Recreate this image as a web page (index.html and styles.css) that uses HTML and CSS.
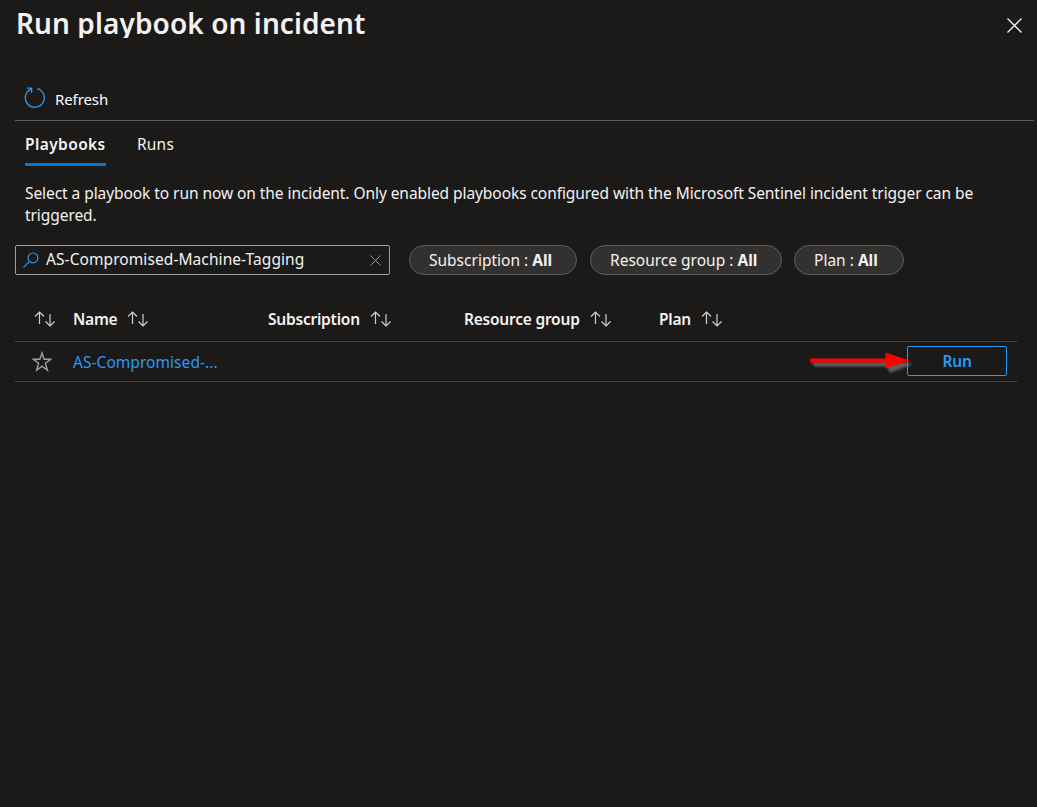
FILE: index.html
```
<!DOCTYPE html>
<html lang="en">
<head>
<meta charset="utf-8">
<title>Run playbook on incident</title>
<link rel="stylesheet" href="styles.css">
</head>
<body>
<svg class="symbols" width="0" height="0">
  <symbol id="sort" viewBox="0 0 22 16">
    <path d="M5.500 13V1.200M1 5.500 5.500 1 10 5.500M16 3v11.800M11.500 10.500 16 15l4.500-4.500" fill="none" stroke="currentColor" stroke-width="1.200"/>
  </symbol>
</svg>
<main class="panel">
  <header class="header">
    <h1 class="title"><span>Run playbook on incident</span></h1>
    <button class="close" aria-label="Close"><svg width="15" height="15" viewBox="0 0 15 15"><path d="M.5.5l14 14M14.500.5l-14 14" stroke="currentColor" stroke-width="1.300"/></svg></button>
  </header>
  <div class="toolbar">
    <svg class="refresh-icon" width="22" height="22" viewBox="0 0 22 22" fill="none" stroke="currentColor" stroke-width="1.300"><path d="M13.300 1.600A9.500 9.500 0 1 1 6.500 2.300M2.800 1.100H7.600V5.800M7.600 1.100 5.300 3.300"/></svg>
    <span class="refresh">Refresh</span>
  </div>
  <nav class="tabs">
    <a class="tab active"><span>Playbooks</span></a>
    <a class="tab"><span>Runs</span></a>
  </nav>
  <p class="intro">Select a playbook to run now on the incident. Only enabled playbooks configured with the Microsoft Sentinel incident trigger can be triggered.</p>
  <div class="filters">
    <div class="search">
      <svg width="16" height="16" viewBox="0 0 16 16" fill="none" stroke="currentColor" stroke-width="1.200"><circle cx="10" cy="5.900" r="4.900"/><path d="M6.500 9.400.5 15.400"/></svg>
      <span class="query">AS-Compromised-Machine-Tagging</span>
      <svg class="clear" width="11" height="11" viewBox="0 0 11 11"><path d="M.5.5l10 10M10.500.5l-10 10" stroke="currentColor"/></svg>
    </div>
    <div class="pill pill-sub"><span>Subscription : <b>All</b></span></div>
    <div class="pill pill-group"><span>Resource group : <b>All</b></span></div>
    <div class="pill pill-plan"><span>Plan : <b>All</b></span></div>
  </div>
  <section class="table">
    <div class="row head">
      <div class="cell"><svg class="sort"><use href="#sort"/></svg></div>
      <div class="cell"><span>Name</span><svg class="sort"><use href="#sort"/></svg></div>
      <div class="cell"><span>Subscription</span><svg class="sort"><use href="#sort"/></svg></div>
      <div class="cell"><span>Resource group</span><svg class="sort"><use href="#sort"/></svg></div>
      <div class="cell"><span>Plan</span><svg class="sort"><use href="#sort"/></svg></div>
    </div>
    <div class="row item">
      <div class="cell"><svg class="star" width="20" height="22" viewBox="0 0 20 22"><path d="M10 2 12.100 8.300H18.700L13.400 12.200 15.400 19.200 10 15.100 4.600 19.200 6.600 12.200 1.300 8.300H7.900Z" fill="none" stroke="currentColor" stroke-width="1.400"/></svg></div>
      <div class="cell"><a class="link">AS-Compromised-...</a></div>
      <button class="run"><span>Run</span></button>
      <svg class="arrow" width="110" height="32" viewBox="0 0 110 32">
        <defs><filter id="shade" x="-10%" y="-50%" width="120%" height="200%"><feGaussianBlur stdDeviation=".8"/></filter></defs>
        <path d="M3 15H78V12L105 17 82 26 79 19.500H7Z" fill="#777" opacity=".75" filter="url(#shade)"/>
        <path d="M2 11.500H77.500V5.500L101.500 13.500 77.500 21.500V15.500H2Z" fill="#f00"/>
      </svg>
    </div>
  </section>
</main>
</body>
</html>
```
FILE: styles.css
```
* { box-sizing: border-box; }
body { margin: 0; background: #1b1a19; color: #f3f2f1; font-family: "Noto Sans", "Open Sans", sans-serif; font-size: 15.5px; line-height: 22px; }
button { padding: 0; background: none; border: 0; color: inherit; font: inherit; }
svg { flex: none; display: block; }
.symbols { position: absolute; }
.panel { width: 1037px; height: 807px; padding-left: 15px; overflow: hidden; white-space: nowrap; }
.header { display: flex; justify-content: space-between; height: 78px; padding-right: 15px; }
.title { margin: 0 0 0 1px; height: 38px; overflow: hidden; font-size: 28px; font-weight: 600; line-height: 47px; letter-spacing: .09px; }
.close { height: 15px; margin-top: 18px; }
.toolbar { display: flex; align-items: center; gap: 9px; width: 1019px; height: 43px; padding-left: 9px; border-bottom: 1px solid #605e5c; }
.refresh-icon { color: #2899f5; margin-top: -3px; }
.refresh { font-size: 15px; letter-spacing: -.1px; color: #fff; }
.tabs { display: flex; gap: 31px; padding-left: 10px; height: 45px; }
.tab { height: 45px; padding-top: 12px; letter-spacing: .2px; }
.active { font-weight: 600; border-bottom: 3px solid #0078d4; width: 81px; letter-spacing: .4px; }
.intro { margin: 16px 0 0 10px; width: 960px; white-space: normal; letter-spacing: -.068px; }
.filters { display: flex; margin-top: 19px; height: 30px; }
.search { display: flex; align-items: center; width: 375px; margin-right: 19px; padding: 0 8px 0 7px; border: 1px solid #a19f9d; border-radius: 2px; color: #2899f5; }
.query { flex: 1; margin-left: 7px; padding-bottom: 2px; letter-spacing: .08px; color: #f3f2f1; }
.clear { color: #979593; }
.pill { display: flex; align-items: center; padding-left: 19px; border: 1px solid #605e5c; border-radius: 15px; background: #323130; }
.pill b { font-weight: 700; }
.pill-sub { width: 168px; margin-right: 13px; }
.pill-group { width: 192px; margin-right: 12px; }
.pill-plan { width: 110px; }
.table { width: 1002px; margin-top: 23px; }
.row { position: relative; display: grid; grid-template-columns: 58px 195px 196px 195px 248px 100px; align-items: center; border-bottom: 1px solid #484644; }
.head { height: 44px; padding-bottom: 1px; font-weight: 600; letter-spacing: -.22px; }
.item { height: 40px; }
.cell { display: flex; align-items: center; gap: 10px; }
.sort { width: 22px; height: 16px; color: #d2d0ce; }
.head .cell:first-child { padding-left: 19px; }
.star { margin-left: 17px; color: #a19f9d; }
.link { letter-spacing: .05px; color: #2899f5; }
.run { grid-column: 6; height: 30px; margin-top: -1px; border: 1px solid #2899f5; border-radius: 2px; color: #2899f5; font-weight: 600; letter-spacing: -.2px; }
.arrow { position: absolute; left: 793px; top: 5px; }
```
